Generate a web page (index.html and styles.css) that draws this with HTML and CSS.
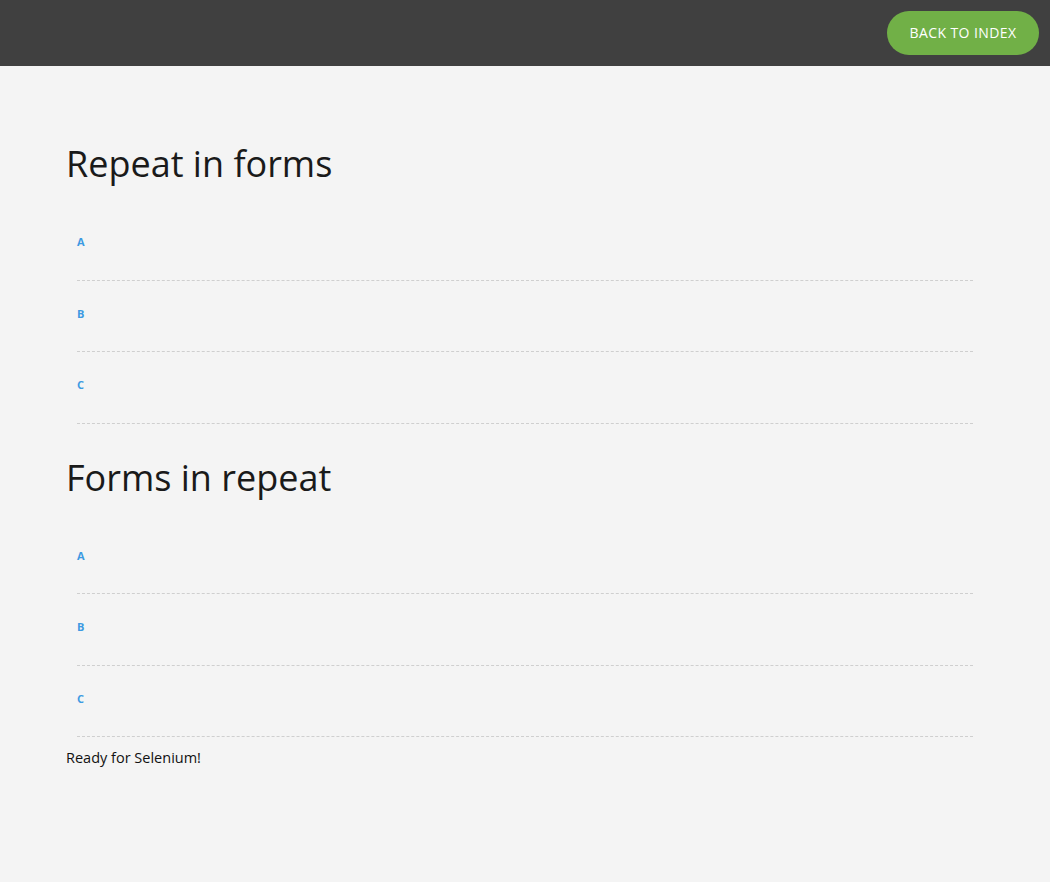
FILE: index.html
```html
<!DOCTYPE html>
<html>
<head>
<meta charset="utf-8">
<title>Repeat and forms</title>
<link rel="stylesheet" href="styles.css">
</head>
<body>
<header class="topbar">
  <a class="back-btn" href="#">Back to index</a>
</header>
<main class="content">
  <h1 class="section-title">Repeat in forms</h1>
  <div class="rows">
    <div class="row"><span class="row-label">A</span></div>
    <div class="row"><span class="row-label">B</span></div>
    <div class="row"><span class="row-label">C</span></div>
  </div>
  <h1 class="section-title">Forms in repeat</h1>
  <div class="rows">
    <div class="row"><span class="row-label">A</span></div>
    <div class="row"><span class="row-label">B</span></div>
    <div class="row"><span class="row-label">C</span></div>
  </div>
  <p class="status">Ready for Selenium!</p>
</main>
</body>
</html>
```
FILE: styles.css
```css
html, body {
  margin: 0;
  padding: 0;
}
body {
  background: #f4f4f4;
  font-family: "Open Sans", "Liberation Sans", sans-serif;
  color: #1a1a1a;
  min-height: 882px;
}
.topbar {
  height: 66px;
  background: #404040;
  display: flex;
  justify-content: flex-end;
  align-items: center;
  padding-right: 11px;
}
.back-btn {
  display: flex;
  align-items: center;
  justify-content: center;
  width: 152px;
  height: 44px;
  border-radius: 22px;
  background: #71b047;
  color: #fff;
  text-decoration: none;
  text-transform: uppercase;
  font-size: 14px;
  letter-spacing: 0.4px;
  line-height: 20px;
  padding-bottom: 1px;
  box-sizing: border-box;
}
.content {
  padding: 0 66px;
}
.section-title {
  margin: 29px 0 0;
  font-size: 36px;
  font-weight: 400;
  line-height: 50px;
  color: #1a1a1a;
}
.content > .section-title:first-child {
  margin-top: 0;
  padding-top: 73px;
}
.rows {
  margin: 0 11px;
  padding-top: 20px;
}
.row {
  padding: 25px 0 30.5px;
  border-bottom: 1px dashed #cfcfcf;
  font-size: 11px;
  line-height: 15px;
}
.row-label {
  font-weight: 700;
  color: #3d9ae2;
}
.status {
  margin: 0;
  padding-top: 11px;
  font-size: 14.5px;
  line-height: 20px;
  color: #111;
}
```
